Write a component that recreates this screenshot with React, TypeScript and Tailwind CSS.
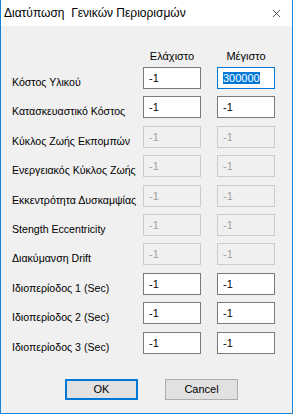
import { X } from "lucide-react";

type Row = { label: string; min: string; max: string; disabled?: boolean; selected?: boolean };

const rows: Row[] = [
  { label: "Κόστος Υλικού", min: "-1", max: "300000", selected: true },
  { label: "Κατασκευαστικό Κόστος", min: "-1", max: "-1" },
  { label: "Κύκλος Ζωής Εκπομπών", min: "-1", max: "-1", disabled: true },
  { label: "Ενεργειακός Κύκλος Ζωής", min: "-1", max: "-1", disabled: true },
  { label: "Εκκεντρότητα Δυσκαμψίας", min: "-1", max: "-1", disabled: true },
  { label: "Stength Eccentricity", min: "-1", max: "-1", disabled: true },
  { label: "Διακύμανση Drift", min: "-1", max: "-1", disabled: true },
  { label: "Ιδιοπερίοδος 1 (Sec)", min: "-1", max: "-1" },
  { label: "Ιδιοπερίοδος 2 (Sec)", min: "-1", max: "-1" },
  { label: "Ιδιοπερίοδος 3 (Sec)", min: "-1", max: "-1" },
];

function Field({ value, disabled, focused, selected }: { value: string; disabled?: boolean; focused?: boolean; selected?: boolean }) {
  const border = focused ? "border-[#0078d7]" : disabled ? "border-[#cccccc]" : "border-[#7a7a7a]";
  const bg = disabled ? "bg-[#f0f0f0] text-[#a0a0a0]" : "bg-white text-black";
  return (
    <div className={`w-[58px] h-[22px] border ${border} ${bg} pl-[5px] pt-[3px] text-[11px] leading-[14px]`}>
      {selected ? <span className="bg-[#0078d7] text-white">{value}</span> : value}
    </div>
  );
}

export default function App() {
  return (
    <div
      className="w-[293px] h-[414px] flex flex-col bg-[#f0f0f0] border-x border-b border-[#1883d7] text-black"
      style={{ fontFamily: '"Liberation Sans", Arial, sans-serif' }}
    >
      <div className="h-[26px] bg-white flex items-center justify-between pl-[3px] pr-[9px]">
        <span className="text-[12px] whitespace-pre">Διατύπωση  Γενικών Περιορισμών</span>
        <X size={13} strokeWidth={1.2} />
      </div>

      <div className="flex flex-col pl-[11px] pt-[23px]">
        <div className="flex text-[11px] leading-[14px] h-[18px]">
          <div className="w-[131px]" />
          <div className="w-[58px] text-center">Ελάχιστο</div>
          <div className="w-[16px]" />
          <div className="w-[58px] text-center">Μέγιστο</div>
        </div>

        <div className="flex flex-col gap-[7.4px]">
          {rows.map((r) => (
            <div key={r.label} className="flex h-[22px]">
              <div className="w-[131px] text-[10.6px] leading-[14px] pt-[8px] whitespace-nowrap">{r.label}</div>
              <Field value={r.min} disabled={r.disabled} />
              <div className="w-[16px]" />
              <Field value={r.max} disabled={r.disabled} focused={r.selected} selected={r.selected} />
            </div>
          ))}
        </div>

        <div className="flex pt-[25px] pl-[53px] gap-[27px] text-[11px]">
          <button className="w-[73px] h-[21px] bg-[#e1e1e1] border-2 border-[#0078d7] leading-none">OK</button>
          <button className="w-[73px] h-[21px] bg-[#e1e1e1] border border-[#adadad] leading-none">Cancel</button>
        </div>
      </div>
    </div>
  );
}
